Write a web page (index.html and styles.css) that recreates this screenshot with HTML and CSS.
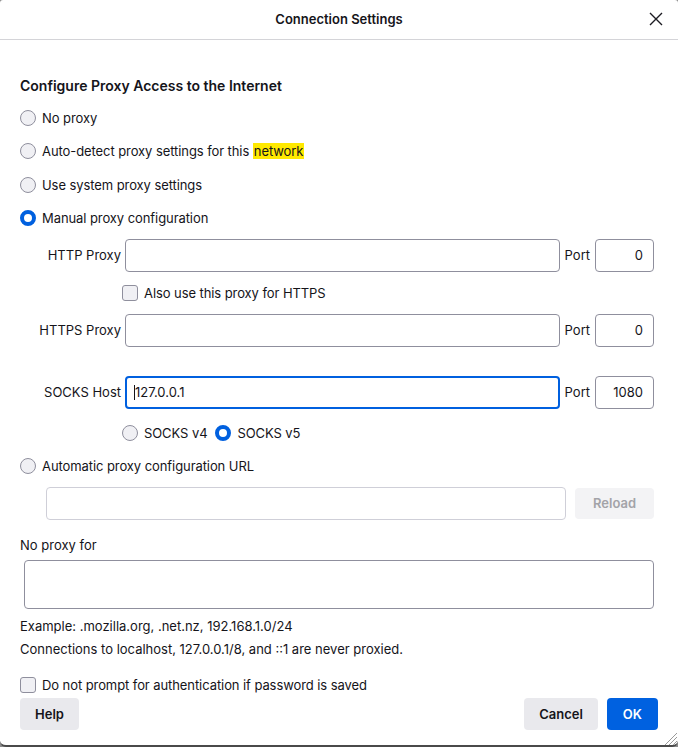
FILE: index.html
```html
<!DOCTYPE html>
<html>
<head>
<meta charset="utf-8">
<link rel="stylesheet" href="styles.css">
</head>
<body>
<div class="dialog">
  <div class="header">
    <div class="title">Connection Settings</div>
    <button class="close" aria-label="Close">
      <svg width="14" height="14" viewBox="0 0 14 14"><path d="M1 1 L13 13 M13 1 L1 13" stroke="#1c1b22" stroke-width="1.4" fill="none"/></svg>
    </button>
  </div>
  <div class="content">
    <h2 class="heading">Configure Proxy Access to the Internet</h2>
    <div class="radios">
      <label class="opt"><span class="radio"></span><span>No proxy</span></label>
      <label class="opt"><span class="radio"></span><span>Auto-detect proxy settings for this <mark class="hl">network</mark></span></label>
      <label class="opt"><span class="radio"></span><span>Use system proxy settings</span></label>
      <label class="opt"><span class="radio checked"></span><span>Manual proxy configuration</span></label>
    </div>

    <div class="manual">
      <div class="prow">
        <span class="plabel">HTTP Proxy</span>
        <div class="field"></div>
        <span class="portlabel">Port</span>
        <div class="field port">0</div>
      </div>
      <label class="opt sub"><span class="check"></span><span>Also use this proxy for HTTPS</span></label>
      <div class="prow">
        <span class="plabel">HTTPS Proxy</span>
        <div class="field"></div>
        <span class="portlabel">Port</span>
        <div class="field port">0</div>
      </div>
      <div class="prow socks">
        <span class="plabel">SOCKS Host</span>
        <div class="field focus"><span class="caret"></span>127.0.0.1</div>
        <span class="portlabel">Port</span>
        <div class="field port">1080</div>
      </div>
      <div class="versions">
        <label class="opt"><span class="radio"></span><span>SOCKS v4</span></label>
        <label class="opt"><span class="radio checked"></span><span>SOCKS v5</span></label>
      </div>
    </div>

    <label class="opt auto"><span class="radio"></span><span>Automatic proxy configuration URL</span></label>
    <div class="urlrow">
      <div class="field disabled"></div>
      <button class="btn reload">Reload</button>
    </div>

    <div class="noproxy">No proxy for</div>
    <div class="textarea"></div>
    <div class="hint first">Example: .mozilla.org, .net.nz, 192.168.1.0/24</div>
    <div class="hint">Connections to localhost, 127.0.0.1/8, and ::1 are never proxied.</div>
    <label class="opt prompt"><span class="check"></span><span>Do not prompt for authentication if password is saved</span></label>

    <div class="footer">
      <button class="btn">Help</button>
      <div class="right">
        <button class="btn">Cancel</button>
        <button class="btn primary">OK</button>
      </div>
    </div>
  </div>
  <svg class="grip" width="14" height="14" viewBox="0 0 14 14"><path d="M2 14 L14 2 M6 14 L14 6 M10 14 L14 10" stroke="#9a9a9a" stroke-width="1" fill="none"/></svg>
</div>
</body>
</html>
```
FILE: styles.css
```css
* { box-sizing: border-box; }
html, body { margin: 0; padding: 0; }
body {
  background: #8a8a8a;
  font-family: "Inter", "Liberation Sans", sans-serif;
  font-size: 13px;
  color: #15141a;
}
.dialog {
  position: relative;
  width: 678px;
  height: 747px;
  background: #fff;
  border-radius: 3px 3px 6px 6px;
  border-bottom: 2px solid #4a4a4a;
  overflow: hidden;
}
.header {
  height: 40px;
  border-bottom: 1px solid #d4d4d8;
  display: flex;
  align-items: center;
  justify-content: center;
  position: relative;
}
.title {
  font-weight: 600;
  font-size: 13px;
  margin-top: -2px;
}
.close {
  position: absolute;
  right: 15px;
  top: 12px;
  width: 14px;
  height: 14px;
  padding: 0;
  border: 0;
  background: none;
  display: flex;
}
.content {
  padding: 0 24px 0 20px;
  display: flex;
  flex-direction: column;
}
.heading {
  margin: 36px 0 0;
  font-size: 14px;
  font-weight: 600;
  line-height: 20px;
}
.radios {
  margin-top: 12px;
  display: flex;
  flex-direction: column;
  gap: 13.4px;
}
.opt {
  display: flex;
  align-items: center;
  height: 20px;
  line-height: 20px;
  white-space: nowrap;
  letter-spacing: -0.08px;
}
.radio {
  width: 16px;
  height: 16px;
  border-radius: 50%;
  border: 1px solid #8f8f9d;
  background: #f0f0f4;
  margin-right: 6px;
  flex: none;
}
.radio.checked {
  border: 4.5px solid #0060df;
  background: #fff;
}
.check {
  width: 16px;
  height: 16px;
  border-radius: 3px;
  border: 1px solid #8f8f9d;
  background: #f0f0f4;
  margin-right: 6px;
  flex: none;
}
.hl {
  background: #ffe900;
  color: #15141a;
  padding: 0 1px;
}
.manual {
  margin-top: 10.8px;
  display: flex;
  flex-direction: column;
}
.prow {
  display: grid;
  grid-template-columns: 100px 1fr auto 59px;
  column-gap: 5px;
  align-items: center;
  height: 33px;
}
.plabel {
  text-align: right;
  margin-right: -1px;
}
.field {
  height: 33px;
  border: 1px solid #8f8f9d;
  border-radius: 4px;
  background: #fff;
  display: flex;
  align-items: center;
  padding: 0 8px;
}
.field.port {
  justify-content: flex-end;
  padding-right: 10px;
}
.field.focus {
  border: 2px solid #0060df;
  padding-left: 7px;
}
.caret {
  width: 1px;
  height: 15px;
  background: #15141a;
}
.field.disabled {
  border-color: #cfcfd8;
  flex: 1;
}
.sub {
  margin: 11px 0 11px 102px;
}
.socks {
  margin-top: 29px;
}
.versions {
  display: flex;
  gap: 8px;
  margin: 14px 0 0 102px;
}
.auto {
  margin-top: 13px;
}
.urlrow {
  margin: 11px 0 0 26px;
  display: flex;
  align-items: center;
  gap: 9px;
}
.btn {
  font-family: inherit;
  font-size: 13px;
  font-weight: 600;
  color: #15141a;
  background: #e9e9ed;
  border: 0;
  border-radius: 4px;
  height: 32px;
  padding: 0 15px;
}
.btn.reload {
  width: 79px;
  height: 31px;
  background: #f3f3f5;
  color: #a3a3a8;
}
.noproxy {
  margin-top: 15px;
  line-height: 20px;
}
.textarea {
  margin: 5px 0 0 4px;
  height: 49px;
  border: 1px solid #8f8f9d;
  border-radius: 4px;
}
.hint {
  line-height: 20px;
  margin-top: 3px;
}
.hint.first {
  margin-top: 7px;
}
.prompt {
  margin-top: 16px;
}
.footer {
  margin-top: 3px;
  margin-right: -4px;
  display: flex;
  justify-content: space-between;
}
.right {
  display: flex;
  gap: 9px;
}
.btn.primary {
  background: #0061e0;
  color: #fff;
  padding: 0 16px;
}
.grip {
  position: absolute;
  right: 1px;
  bottom: 0;
}
```
